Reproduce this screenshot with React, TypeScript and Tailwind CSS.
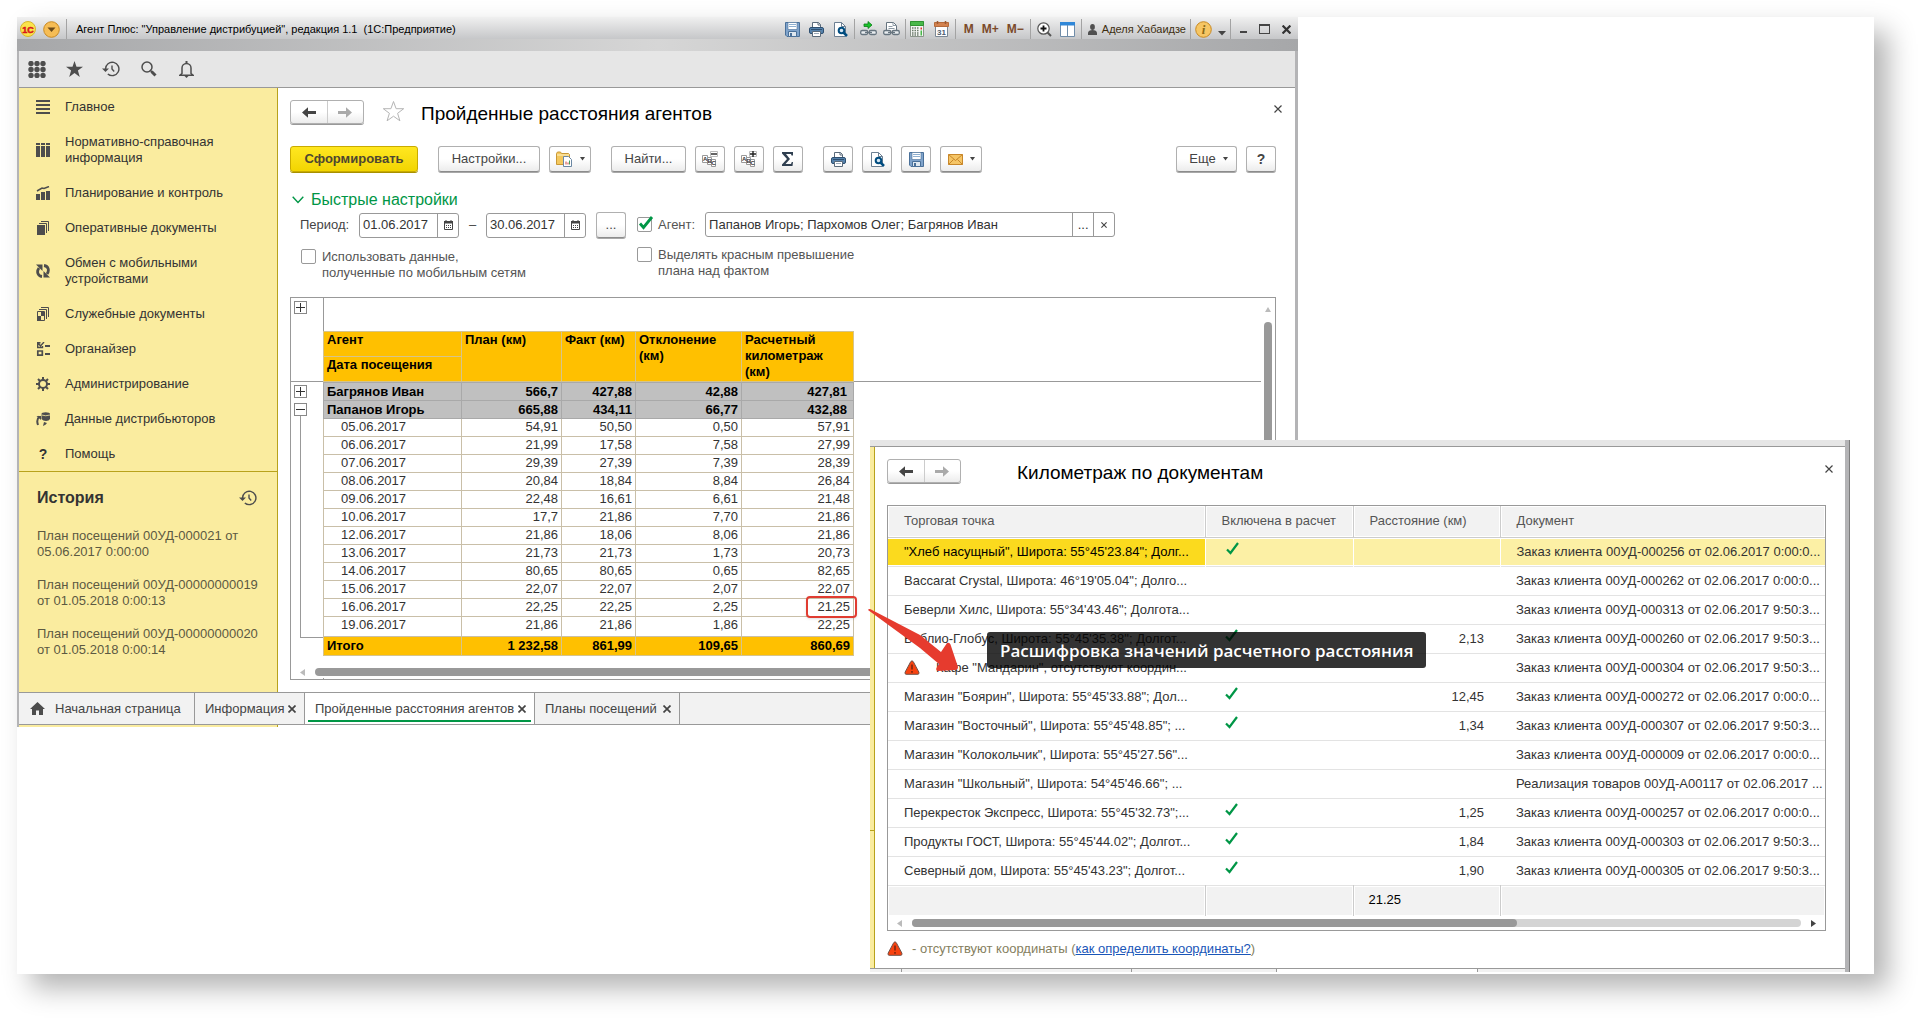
import React from 'react';

type IconProps = { className?: string };

/* ---------- icons ---------- */

const SaveIcon = ({ className }: IconProps) => (
  <svg className={className} width="15" height="15" viewBox="0 0 15 15">
    <path d="M.5.5h14v14H2L.5 13z" fill="#7fa3cb" stroke="#4a7099" />
    <path d="M3 .5h9v7H3z" fill="#fff" stroke="#4a7099" strokeWidth=".6" />
    <path d="M4 2.500h7M4 4.500h7" stroke="#8fb0d0" />
    <path d="M3.500 9.500h8v5h-8z" fill="#dfe8f0" stroke="#4a7099" />
    <path d="M5 11h2v3.500H5z" fill="#4a7099" />
  </svg>
);

const PrintIcon = ({ className }: IconProps) => (
  <svg className={className} width="15" height="15" viewBox="0 0 15 15">
    <path d="M3.500 6V.5h6l2 2V6" fill="#fff" stroke="#5b6b7b" />
    <path d="M9 .5v2.500h2.500" fill="none" stroke="#5b6b7b" />
    <rect x=".5" y="5.500" width="14" height="6" rx="1.500" fill="#5682ac" stroke="#2e4f70" />
    <path d="M2 7.500h11" stroke="#2e4f70" />
    <path d="M3.500 9.500h8v5h-8z" fill="#fff" stroke="#5b6b7b" />
    <path d="M5 11.500h5" stroke="#9aa9b8" />
  </svg>
);

const PreviewIcon = ({ className }: IconProps) => (
  <svg className={className} width="15" height="15" viewBox="0 0 15 15">
    <path d="M1.500.5h7l4 4v10h-11z" fill="#fff" stroke="#6c7f92" />
    <path d="M8.500.5v4h4" fill="none" stroke="#6c7f92" />
    <circle cx="8.500" cy="8.500" r="2.800" fill="#d5e6f3" stroke="#004d80" strokeWidth="2" />
    <path d="M10.500 10.500l3.500 3.500" stroke="#004d80" strokeWidth="2.500" />
  </svg>
);

const LinkIcon = () => (
  <svg width="17" height="16" viewBox="0 0 17 16">
    <path d="M4 3h4V.5L12 4 8 7.500V5.500H4z" fill="#19c22a" stroke="#0b7d18" strokeWidth=".8" />
    <rect x=".7" y="9.500" width="7" height="4" rx="1.500" fill="#e8edf0" stroke="#66747f" strokeWidth="1.300" />
    <rect x="9.300" y="9.500" width="7" height="4" rx="1.500" fill="#e8edf0" stroke="#66747f" strokeWidth="1.300" />
    <path d="M5 11.500h7" stroke="#66747f" strokeWidth="1.400" />
  </svg>
);

const PageLinkIcon = () => (
  <svg width="17" height="16" viewBox="0 0 17 16">
    <path d="M3.500 9V1.500h7l3 3V9" fill="#fff" stroke="#66747f" />
    <path d="M10 1.500v3h3.500M5.500 5.500h4M5.500 7.500h6" fill="none" stroke="#8d9aa5" />
    <rect x=".7" y="9.500" width="7" height="4" rx="1.500" fill="#e8edf0" stroke="#66747f" strokeWidth="1.300" />
    <rect x="9.300" y="9.500" width="7" height="4" rx="1.500" fill="#e8edf0" stroke="#66747f" strokeWidth="1.300" />
    <path d="M5 11.500h7" stroke="#66747f" strokeWidth="1.400" />
  </svg>
);

const CalculatorIcon = () => (
  <svg width="14" height="16" viewBox="0 0 14 16">
    <path d="M.5.5h13v15H.5z" fill="#f4f6f4" stroke="#8a958a" />
    <path d="M.5.5h13v4H.5z" fill="#49b84a" stroke="#2f9431" />
    <path d="M2 7h7M2 9.500h7M2 12h7M2 14h7" stroke="#6b7b6b" strokeWidth="1.300" strokeDasharray="1.500 1" />
    <path d="M10.500 6.500h1.500v2h-1.500z" fill="#d33" />
    <path d="M10.500 9.500h1.500v5h-1.500z" fill="#49b84a" />
  </svg>
);

const CalendarIcon = () => (
  <svg width="15" height="16" viewBox="0 0 15 16">
    <path d="M1.500 3h12v12.500h-12z" fill="#fff" stroke="#7b8794" />
    <path d="M.5 1.500h14v4H.5z" fill="#d3824f" stroke="#b56a3b" />
    <path d="M3.500 0v3M11.500 0v3" stroke="#9b5a32" strokeWidth="1.500" />
    <text x="7.500" y="13.500" textAnchor="middle" fontSize="8" fontWeight="700" fill="#4c5c70" fontFamily="Liberation Sans, sans-serif">
      31
    </text>
  </svg>
);

const ZoomInIcon = () => (
  <svg width="15" height="15" viewBox="0 0 15 15">
    <circle cx="6.500" cy="6.500" r="5.700" fill="#fff" stroke="#555" strokeWidth="1.200" />
    <path d="M6.500 3.500v6M3.500 6.500h6" stroke="#111" strokeWidth="1.800" />
    <path d="M10.500 10.500l3.500 3.500" stroke="#555" strokeWidth="2" />
  </svg>
);

const PanelsIcon = () => (
  <svg width="15" height="15" viewBox="0 0 15 15">
    <path d="M.5.5h14v14H.5z" fill="#fff" stroke="#6f8ca8" />
    <path d="M0 0h15v3.500H0z" fill="#2f87d8" />
    <path d="M7.500 3v12" stroke="#6f8ca8" />
  </svg>
);

const UserIcon = () => (
  <svg width="9" height="11" viewBox="0 0 9 11">
    <ellipse cx="4.500" cy="3" rx="2.400" ry="3" fill="#505050" />
    <path d="M0 11V9c0-2 2-3 4.500-3S9 7 9 9v2z" fill="#505050" />
  </svg>
);

const InfoIcon = () => (
  <svg width="17" height="17" viewBox="0 0 17 17">
    <circle cx="8.500" cy="8.500" r="7.800" fill="#f6c664" stroke="#c98a22" />
    <text x="8.500" y="13" textAnchor="middle" fontSize="13" fontStyle="italic" fontWeight="700" fill="#8b6914" fontFamily="Liberation Serif, serif">
      i
    </text>
  </svg>
);

const Caret = ({ className }: IconProps) => (
  <svg className={className} width="5" height="4" viewBox="0 0 5 4">
    <path d="M0 0h5L2.500 3.500z" fill="#444" />
  </svg>
);

const HistoryIcon = () => (
  <svg width="18" height="16" viewBox="0 0 18 16" fill="none" stroke="#4d4d4d">
    <path d="M3.500 8a6.700 6.700 0 1 1 2.300 5" strokeWidth="1.400" />
    <path d="M0 7.500h7L3.500 11z" fill="#4d4d4d" stroke="none" />
    <path d="M10 4.500V8l2.200 2.500" strokeWidth="1.400" />
  </svg>
);

const StarIcon = () => (
  <svg width="17" height="16" viewBox="0 0 17 16">
    <path d="M8.500 0l2 5.800H17l-5.100 3.800 1.900 6.400-5.300-3.900L3.200 16l1.900-6.400L0 5.800h6.500z" fill="#4d4d4d" />
  </svg>
);

const SearchIcon = () => (
  <svg width="16" height="16" viewBox="0 0 16 16" fill="none" stroke="#4d4d4d">
    <circle cx="6" cy="6" r="5" strokeWidth="1.500" />
    <path d="M9 9l2 2" strokeWidth="1.500" />
    <path d="M10.500 10.500l4 4" strokeWidth="3" />
  </svg>
);

const BellIcon = () => (
  <svg width="15" height="17" viewBox="0 0 15 17" fill="none" stroke="#4d4d4d" strokeWidth="1.500">
    <path d="M3 12.500V7a4.500 4.500 0 0 1 9 0v5.500l2 1.700H1z" />
    <path d="M7.500 0v2.500" strokeWidth="2" />
    <path d="M5.500 15h4l-2 2z" fill="#4d4d4d" stroke="none" />
  </svg>
);

const AppsIcon = () => (
  <svg width="18" height="17" viewBox="0 0 18 17" fill="#4d4d4d">
    {[3, 9, 15].map((x) => [2.5, 8.5, 14.5].map((y) => <circle key={`${x}-${y}`} cx={x} cy={y} r="2.700" />))}
  </svg>
);

const ArrowLeft = ({ color, flip }: { color: string; flip?: boolean }) => (
  <svg width="14" height="11" viewBox="0 0 14 11" className={flip ? 'rotate-180' : ''}>
    <path d="M0 5.500L6 .3v3.700h8v3H6v3.700z" fill={color} />
  </svg>
);

const CloseIcon = ({ size = 8, width = 1.2, color = '#444' }: { size?: number; width?: number; color?: string }) => (
  <svg width={size} height={size} viewBox="0 0 8 8">
    <path d="M.5.5l7 7M7.500.5l-7 7" stroke={color} strokeWidth={width} />
  </svg>
);

const CheckIcon = () => (
  <svg width="13" height="13" viewBox="0 0 13 13">
    <path d="M1 7.500L4.500 11 12 1" fill="none" stroke="#009646" strokeWidth="2.200" />
  </svg>
);

const WarningIcon = () => (
  <svg width="16" height="15" viewBox="0 0 16 15">
    <path d="M6.700 1.700q1.300-1.800 2.600 0l5.600 10.500q.5 2-1 2.100H2.100q-1.500-.1-1-2.100z" fill="#f8420f" stroke="#6f5048" />
    <path d="M8 4.500v5M8 11v1.700" stroke="#5f1f10" strokeWidth="1.300" />
  </svg>
);

const MiniCalendar = () => (
  <svg width="9" height="10" viewBox="0 0 9 10">
    <path d="M.5 1.500h8v8h-8z" fill="#fff" stroke="#444" />
    <path d="M0 1h9v2.500H0z" fill="#444" />
    <path d="M2 0v2M7 0v2" stroke="#444" />
    <path d="M2 5.500h5.500M2 7.500h5.500" stroke="#444" strokeDasharray="1 1" />
  </svg>
);

const GroupTextIcon = ({ plus }: { plus?: boolean }) => (
  <svg width="16" height="16" viewBox="0 0 16 16">
    <path d="M.5 4.500h5v7h-5z" fill="#fff" stroke="#999" />
    <path d="M5.500 6.500h4v7h-4z" fill="#fff" stroke="#999" />
    <path d="M9.500 8.500h4v7h-4z" fill="#fff" stroke="#999" />
    <g fontSize="6" fontWeight="700" fill="#333" fontFamily="Liberation Sans, sans-serif">
      <text x="1" y="10">A</text>
      <text x="5.500" y="12">B</text>
      <text x="9.500" y="14">C</text>
    </g>
    <path d="M8.500.5h7v5h-7z" fill="#fff" stroke="#bbb" />
    <path d={plus ? 'M9 3h6M12 0v6' : 'M9 3h6'} stroke="#222" strokeWidth="1.400" />
  </svg>
);

const FolderReportIcon = () => (
  <svg width="17" height="16" viewBox="0 0 17 16">
    <path d="M.5 13.500v-11l1-1.500h3l1 1.500h7l1 1v3H8v7z" fill="#f4c85e" stroke="#c99836" />
    <path d="M1 4h12" stroke="#fbe6a8" strokeWidth="1.500" />
    <path d="M7.500 5.500h5l3 3v7h-8z" fill="#fff" stroke="#6b87a3" />
    <path d="M10 13.500v-3M12 13.500v-2" stroke="#d0453c" />
    <path d="M13.500 13.500v-4" stroke="#3f9a5a" />
  </svg>
);

const MailIcon = () => (
  <svg width="15" height="11" viewBox="0 0 15 11">
    <path d="M.5.5h14v10H.5z" fill="#f5c566" stroke="#c8872a" />
    <path d="M.5.5l7 6 7-6M.5 10.500l5-5M14.500 10.500l-5-5" fill="none" stroke="#c8872a" />
  </svg>
);

const HomeIcon = () => (
  <svg width="15" height="13" viewBox="0 0 15 13">
    <path d="M7.500 0L15 7h-2v6H9V8.500H6V13H2V7H0z" fill="#4d4d4d" />
  </svg>
);

const menuIcons: Record<string, React.ReactNode> = {
  main: <path d="M0 1h14M0 5h14M0 9h14M0 13h14" stroke="#4d4d4d" strokeWidth="2" />,
  ref: (
    <g fill="#4d4d4d">
      <path d="M0 0h4v2H0zM5 0h4v2H5zM10 0h4v2h-4zM0 3h4v11H0zM5 3h4v11H5zM10 3h4v11h-4z" />
    </g>
  ),
  plan: (
    <g fill="#4d4d4d">
      <path d="M0 8h4v6H0zM5 6h4v8H5zM10 5h4v9h-4z" />
      <path d="M1 5l5-3 2 .5L13 .5" fill="none" stroke="#4d4d4d" strokeWidth="1.500" />
    </g>
  ),
  docs: (
    <g>
      <path d="M1 4h8v10H1z" fill="#4d4d4d" />
      <path d="M3 2.500h7.500V12M5 .5h7.500V10" fill="none" stroke="#4d4d4d" />
    </g>
  ),
  sync: (
    <g fill="none" stroke="#4d4d4d" strokeWidth="2.800">
      <path d="M6 12.500C1.500 12 .5 7.500 3 4" />
      <path d="M8 1.500c4.500.5 5.500 5 3 8.500" />
      <path d="M0 .5h6.500V7zM14 13.500H7.500V7z" fill="#4d4d4d" stroke="none" />
    </g>
  ),
  service: (
    <g>
      <path d="M1.500 4.500h7v9h-7z" fill="none" stroke="#4d4d4d" />
      <path d="M1 9h4v5H1zM5 5h3.500v4H5z" fill="#4d4d4d" />
      <path d="M3 2.500h7.500V12M5 .5h7.500V10" fill="none" stroke="#4d4d4d" />
    </g>
  ),
  organizer: (
    <g fill="none" stroke="#4d4d4d">
      <path d="M1 .7h3.500M1.700 0v6M1 5.500h5.500V4M2.500 1.500l2 2.500L8 0" strokeWidth="1.400" />
      <path d="M1.800 9h4.500v4.200H1.800z" strokeWidth="1.700" />
      <path d="M9 4h5M9 12h5" strokeWidth="2" />
    </g>
  ),
  admin: (
    <g fill="none" stroke="#4d4d4d">
      <circle cx="7" cy="7" r="4" strokeWidth="2" />
      <path d="M7 0v3M7 11v3M0 7h3M11 7h3M2 2l2 2M10 10l2 2M12 2l-2 2M4 10l-2 2" strokeWidth="2" />
    </g>
  ),
  data: (
    <g>
      <path d="M5.500 2Q5.500.3 9.700.3T14 2v5q-1 2-4 2T5.500 7z" fill="#4d4d4d" />
      <path d="M5.500 3q4.200 1.500 8.500 0" fill="none" stroke="#faec9f" strokeWidth=".8" />
      <path d="M3.500 4.500Q0 7.500 2 13" fill="none" stroke="#4d4d4d" strokeWidth="2" />
      <path d="M.5 4h4.500v4zM7 14l1-4 3 1q-1 2-4 3z" fill="#4d4d4d" />
    </g>
  ),
};

/* ---------- data ---------- */

const menu: { icon: string; label: string }[] = [
  { icon: 'main', label: 'Главное' },
  { icon: 'ref', label: 'Нормативно-справочная информация' },
  { icon: 'plan', label: 'Планирование и контроль' },
  { icon: 'docs', label: 'Оперативные документы' },
  { icon: 'sync', label: 'Обмен с мобильными устройствами' },
  { icon: 'service', label: 'Служебные документы' },
  { icon: 'organizer', label: 'Органайзер' },
  { icon: 'admin', label: 'Администрирование' },
  { icon: 'data', label: 'Данные дистрибьюторов' },
  { icon: 'help', label: 'Помощь' },
];

const history = [
  'План посещений 00УД-000021 от 05.06.2017 0:00:00',
  'План посещений 00УД-00000000019 от 01.05.2018 0:00:13',
  'План посещений 00УД-00000000020 от 01.05.2018 0:00:14',
];

const agents = [
  ['Багрянов Иван', '566,7', '427,88', '42,88', '427,81'],
  ['Папанов Игорь', '665,88', '434,11', '66,77', '432,88'],
];

const visits = [
  ['05.06.2017', '54,91', '50,50', '0,50', '57,91'],
  ['06.06.2017', '21,99', '17,58', '7,58', '27,99'],
  ['07.06.2017', '29,39', '27,39', '7,39', '28,39'],
  ['08.06.2017', '20,84', '18,84', '8,84', '26,84'],
  ['09.06.2017', '22,48', '16,61', '6,61', '21,48'],
  ['10.06.2017', '17,7', '21,86', '7,70', '21,86'],
  ['12.06.2017', '21,86', '18,06', '8,06', '21,86'],
  ['13.06.2017', '21,73', '21,73', '1,73', '20,73'],
  ['14.06.2017', '80,65', '80,65', '0,65', '82,65'],
  ['15.06.2017', '22,07', '22,07', '2,07', '22,07'],
  ['16.06.2017', '22,25', '22,25', '2,25', '21,25'],
  ['19.06.2017', '21,86', '21,86', '1,86', '22,25'],
];

const total = ['Итого', '1 232,58', '861,99', '109,65', '860,69'];

interface DocRow {
  point: string;
  included?: boolean;
  warning?: boolean;
  distance?: string;
  doc: string;
}

const docRows: DocRow[] = [
  { point: '"Хлеб насущный", Широта: 55°45\'23.84"; Долг...', included: true, doc: 'Заказ клиента 00УД-000256 от 02.06.2017 0:00:0...' },
  { point: 'Baccarat Crystal, Широта: 46°19\'05.04"; Долго...', doc: 'Заказ клиента 00УД-000262 от 02.06.2017 0:00:0...' },
  { point: 'Беверли Хилс, Широта: 55°34\'43.46"; Долгота...', doc: 'Заказ клиента 00УД-000313 от 02.06.2017 9:50:3...' },
  { point: 'Библио-Глобус, Широта: 55°45\'35.38"; Долгот...', included: true, distance: '2,13', doc: 'Заказ клиента 00УД-000260 от 02.06.2017 9:50:3...' },
  { point: 'Кафе "Мандарин", отсутствуют координ...', warning: true, doc: 'Заказ клиента 00УД-000304 от 02.06.2017 9:50:3...' },
  { point: 'Магазин "Боярин", Широта: 55°45\'33.88"; Дол...', included: true, distance: '12,45', doc: 'Заказ клиента 00УД-000272 от 02.06.2017 0:00:0...' },
  { point: 'Магазин "Восточный", Широта: 55°45\'48.85"; ...', included: true, distance: '1,34', doc: 'Заказ клиента 00УД-000307 от 02.06.2017 9:50:3...' },
  { point: 'Магазин "Колокольчик", Широта: 55°45\'27.56"...', doc: 'Заказ клиента 00УД-000009 от 02.06.2017 0:00:0...' },
  { point: 'Магазин "Школьный", Широта: 54°45\'46.66"; ...', doc: 'Реализация товаров 00УД-А00117 от 02.06.2017 ...' },
  { point: 'Перекресток Экспресс, Широта: 55°45\'32.73";...', included: true, distance: '1,25', doc: 'Заказ клиента 00УД-000257 от 02.06.2017 0:00:0...' },
  { point: 'Продукты ГОСТ, Широта: 55°45\'44.02"; Долгот...', included: true, distance: '1,84', doc: 'Заказ клиента 00УД-000303 от 02.06.2017 9:50:3...' },
  { point: 'Северный дом, Широта: 55°45\'43.23"; Долгот...', included: true, distance: '1,90', doc: 'Заказ клиента 00УД-000305 от 02.06.2017 9:50:3...' },
];

/* ---------- small parts ---------- */

const ToolButton: React.FC<{ className?: string; label?: string; children: React.ReactNode }> = ({ className = '', label, children }) => (
  <button
    type="button"
    aria-label={label}
    className={`flex h-[26px] shrink-0 items-center justify-center rounded-[3px] border border-[#b0b0b0] border-b-[#8c8c8c] bg-linear-to-b from-white from-50% to-[#ececec] text-[#444] shadow-[0_1px_0_#a8a8a8] ${className}`}
  >
    {children}
  </button>
);

const NavButtons = () => (
  <div className="flex h-[24px] w-[74px] shrink-0 rounded-[3px] border border-[#b0b0b0] bg-linear-to-b from-white from-50% to-[#ececec] shadow-[0_1px_0_#999]">
    <button type="button" aria-label="Назад" className="flex flex-1 items-center justify-center border-r border-[#ccc]">
      <ArrowLeft color="#444" />
    </button>
    <button type="button" aria-label="Вперед" className="flex flex-1 items-center justify-center">
      <ArrowLeft color="#aaa" flip />
    </button>
  </div>
);

const Separator = () => <span className="h-5 w-px shrink-0 bg-[#a3a3a3]" />;

const DateField = ({ value, label }: { value: string; label: string }) => (
  <div className="flex h-[25px] w-[100px] rounded-[3px] border border-[#999] bg-white">
    <input aria-label={label} defaultValue={value} className="w-[77px] min-w-0 pl-[3px] text-[#333] outline-none" />
    <button type="button" aria-label="Выбрать дату" className="flex flex-1 items-center justify-center border-l border-[#999]">
      <MiniCalendar />
    </button>
  </div>
);

const CheckBox: React.FC<{ checked?: boolean; id: string; children: React.ReactNode }> = ({ checked, id, children }) => (
  <div className="flex items-start gap-[6px]">
    <span className="relative block size-[15px] shrink-0">
      <input
        id={id}
        type="checkbox"
        defaultChecked={checked}
        className="peer block size-[15px] appearance-none rounded-[2px] border border-[#999] bg-white"
      />
      <svg className="pointer-events-none absolute inset-0 hidden overflow-visible peer-checked:block" width="15" height="15" viewBox="0 0 15 15">
        <path d="M3 6.500L6.500 10.500 15 0" fill="none" stroke="#009646" strokeWidth="2.800" />
      </svg>
    </span>
    <label htmlFor={id} className="leading-4 text-[#555]">
      {children}
    </label>
  </div>
);

const ExpandButton = ({ open, className = '' }: { open?: boolean; className?: string }) => (
  <button
    type="button"
    aria-label={open ? 'Свернуть' : 'Развернуть'}
    className={`flex size-[13px] items-center justify-center border border-[#888] bg-white ${className}`}
  >
    <svg width="9" height="9" viewBox="0 0 9 9">
      <path d={open ? 'M0 4.500h9' : 'M0 4.500h9M4.500 0v9'} stroke="#333" />
    </svg>
  </button>
);

/* ---------- main window ---------- */

const TitleBar = () => (
  <header className="flex h-[34px] flex-col bg-linear-to-r from-[#a6a7a9] via-[#d6d6d6] to-[#a6a7a9]">
    <div className="flex h-[22px] items-center bg-linear-to-b from-[#f0f0f0] to-[#c6c7c9] pt-[2px] pr-[7px] pl-[3px]">
      <svg width="16" height="16" viewBox="0 0 16 16" className="shrink-0">
        <circle cx="8" cy="8" r="7.500" fill="#fbe44b" stroke="#d8b52c" />
        <text x="8" y="11.500" textAnchor="middle" fontSize="9" fontWeight="700" fill="#d8171b" stroke="#d8171b" strokeWidth=".5" fontFamily="Liberation Sans, sans-serif">
          1С
        </text>
      </svg>
      <button type="button" aria-label="Главное меню" className="ml-[7px] shrink-0">
        <svg width="17" height="17" viewBox="0 0 17 17">
          <circle cx="8.500" cy="8.500" r="7.800" fill="#f6bd55" stroke="#c98a22" />
          <path d="M4.500 6.500h8l-4 4.500z" fill="#6b4a1a" />
        </svg>
      </button>
      <span className="ml-[6px] h-5 w-px bg-[#a3a3a3]" />
      <h1 className="ml-[9px] text-[11px] whitespace-nowrap text-black">Агент Плюс: "Управление дистрибуцией", редакция 1.1&nbsp; (1С:Предприятие)</h1>
      <div className="ml-auto flex items-center">
        <div className="mr-[6px] flex items-center gap-[9px]">
          <SaveIcon />
          <PrintIcon />
          <PreviewIcon />
        </div>
        <Separator />
        <div className="mx-[5px] flex items-center gap-[6px]">
          <LinkIcon />
          <PageLinkIcon />
        </div>
        <Separator />
        <div className="mr-[6px] ml-[4px] flex items-center gap-[10px]">
          <CalculatorIcon />
          <CalendarIcon />
        </div>
        <Separator />
        <div className="flex w-[74px] items-center justify-between pr-[6px] pl-2 text-[12px] font-bold text-[#7b4a2b]">
          <button type="button">M</button>
          <button type="button">M+</button>
          <button type="button">M−</button>
        </div>
        <Separator />
        <div className="mx-[6px] flex items-center gap-[8px]">
          <ZoomInIcon />
          <PanelsIcon />
        </div>
        <Separator />
        <div className="mr-[4px] ml-[6px] flex items-center gap-[5px] text-[11px] text-[#3d2e10]">
          <UserIcon />
          <span>Аделя Хабаидзе</span>
        </div>
        <Separator />
        <div className="mx-[4px] flex items-center gap-[6px]">
          <InfoIcon />
          <svg width="8" height="5" viewBox="0 0 8 5" className="mt-2">
            <path d="M0 0h8L4 4.500z" fill="#444" />
          </svg>
        </div>
        <Separator />
        <div className="ml-[9px] flex items-center gap-[12px]">
          <button type="button" aria-label="Свернуть окно" className="mt-[6px] h-[2px] w-[7px] bg-[#444]" />
          <button type="button" aria-label="Развернуть окно" className="h-[10px] w-[11px] border border-t-2 border-[#444]" />
          <button type="button" aria-label="Закрыть окно">
            <CloseIcon size={9} width={2} color="#333" />
          </button>
        </div>
      </div>
    </div>
  </header>
);

const Sidebar = () => (
  <aside className="w-[259px] shrink-0 border-r border-[#b8a21c] bg-[#faec9f]">
    <nav className="border-b border-[#b8a21c] pt-px">
      {menu.map((item) => (
        <a key={item.label} href="#" className="flex items-center pt-[10px] pr-9 pb-[9px] pl-[17px] leading-4 text-[#333]">
          {item.icon === 'help' ? (
            <span className="w-[14px] text-center text-[14px] font-bold">?</span>
          ) : (
            <svg width="14" height="14" viewBox="0 0 14 14" className="shrink-0">
              {menuIcons[item.icon]}
            </svg>
          )}
          <span className="ml-[15px] max-w-[160px]">{item.label}</span>
        </a>
      ))}
    </nav>
    <section className="pb-[34px] pl-[18px]">
      <div className="flex h-[52px] items-center justify-between pr-[20px]">
        <h2 className="text-[16px] font-bold text-[#333]">История</h2>
        <HistoryIcon />
      </div>
      <div className="mt-1 flex flex-col gap-[17px] pr-[10px] leading-4 text-[#5c5942]">
        {history.map((item) => (
          <a key={item} href="#">
            {item}
          </a>
        ))}
      </div>
    </section>
  </aside>
);

const CommandBar = () => (
  <div className="flex items-center">
    <button
      type="button"
      className="h-[26px] w-[128px] rounded-[3px] border border-[#c9ab00] bg-linear-to-b from-[#ffe71f] to-[#f2d500] font-bold text-[#4d4630] shadow-[0_1px_0_#a89000]"
    >
      Сформировать
    </button>
    <ToolButton className="ml-5 w-[102px]">Настройки...</ToolButton>
    <ToolButton className="ml-[9px] w-[42px] gap-[7px]" label="Варианты отчета">
      <FolderReportIcon />
      <Caret />
    </ToolButton>
    <ToolButton className="ml-5 w-[75px]">Найти...</ToolButton>
    <ToolButton className="ml-[9px] w-[30px]" label="Свернуть группы">
      <GroupTextIcon />
    </ToolButton>
    <ToolButton className="ml-[9px] w-[30px]" label="Развернуть группы">
      <GroupTextIcon plus />
    </ToolButton>
    <ToolButton className="ml-[9px] w-[30px]" label="Сумма">
      <svg width="12" height="14" viewBox="0 0 12 14">
        <path d="M0 0h11v3.500H9.500L9 2H4l4 5-4.500 5H9l.8-2H11l-.5 4H0v-1.500L5 7 0 1.500z" fill="#2f3f50" />
      </svg>
    </ToolButton>
    <ToolButton className="ml-5 w-[30px]" label="Печать">
      <PrintIcon />
    </ToolButton>
    <ToolButton className="ml-[9px] w-[30px]" label="Предварительный просмотр">
      <PreviewIcon />
    </ToolButton>
    <ToolButton className="ml-[9px] w-[30px]" label="Сохранить">
      <SaveIcon />
    </ToolButton>
    <ToolButton className="ml-[9px] w-[42px] gap-[7px]" label="Отправить">
      <MailIcon />
      <Caret />
    </ToolButton>
    <ToolButton className="ml-auto w-[61px] gap-[7px] pl-1">
      Еще
      <Caret />
    </ToolButton>
    <ToolButton className="ml-[9px] w-[30px] text-[14px] font-bold" label="Справка">
      ?
    </ToolButton>
  </div>
);

const QuickSettings = () => (
  <section className="mt-[18px]">
    <h3 className="flex items-center gap-[7px] pl-[2px] text-[16px] leading-[20px] text-[#009646]">
      <svg width="12" height="8" viewBox="0 0 12 8">
        <path d="M.7.7L6 6.500 11.300.7" fill="none" stroke="#009646" strokeWidth="1.400" />
      </svg>
      Быстрые настройки
    </h3>
    <div className="mt-[2px] flex items-start pl-[10px]">
      <div className="w-[337px]">
        <div className="flex items-center">
          <span className="w-[59px] text-[#444]">Период:</span>
          <DateField value="01.06.2017" label="Начало периода" />
          <span className="w-[27px] text-center text-[#444]">–</span>
          <DateField value="30.06.2017" label="Конец периода" />
          <ToolButton className="ml-[10px] w-[30px]">...</ToolButton>
        </div>
        <div className="mt-[11px] pl-px">
          <CheckBox id="mobile-data">
            Использовать данные,
            <br />
            полученные по мобильным сетям
          </CheckBox>
        </div>
      </div>
      <div>
        <div className="flex h-[25px] items-center">
          <CheckBox checked id="agent-filter">
            Агент:
          </CheckBox>
          <div className="ml-[10px] flex h-[25px] w-[410px] rounded-[3px] border border-[#999] bg-white">
            <input aria-label="Агент" defaultValue="Папанов Игорь; Пархомов Олег; Багрянов Иван" className="min-w-0 flex-1 pl-[3px] text-[#333] outline-none" />
            <button type="button" aria-label="Выбрать" className="w-[21px] border-l border-[#999] text-[#333]">
              ...
            </button>
            <button type="button" aria-label="Очистить" className="flex w-[21px] items-center justify-center border-l border-[#999]">
              <CloseIcon size={6} width={1.5} />
            </button>
          </div>
        </div>
        <div className="mt-[10px]">
          <CheckBox id="highlight">
            Выделять красным превышение
            <br />
            плана над фактом
          </CheckBox>
        </div>
      </div>
    </div>
  </section>
);

const Report = () => (
  <section className="relative mt-4 flex h-[383px] border border-[#999] bg-white">
    <div className="flex w-[33px] shrink-0 flex-col items-start border-r border-[#999] pt-[3px]">
      <ExpandButton className="ml-[3px]" />
      <div className="mt-[67px] w-full border-t border-[#999] pt-[3px] pl-[3px]">
        <ExpandButton />
        <ExpandButton open className="mt-[5px]" />
      </div>
      <div className="ml-[9px] h-[222px] w-[23px] border-b border-l border-[#999]" />
      <div className="-mr-px h-[40px] w-[33px] border-r border-white" />
    </div>
    <div className="min-w-0 flex-1">
      <div className="border-b border-[#999] pt-[33px]">
        <table className="-mb-px -ml-px w-[530px] table-fixed border-collapse bg-[#ffc000] text-left font-bold text-black">
          <colgroup>
            <col className="w-[138px]" />
            <col className="w-[100px]" />
            <col className="w-[74px]" />
            <col className="w-[106px]" />
            <col className="w-[112px]" />
          </colgroup>
          <thead className="align-top leading-4">
            <tr className="h-[25px]">
              <th className="border border-[#d6c48c] px-[3px]">Агент</th>
              <th rowSpan={2} className="border border-[#d6c48c] px-[3px]">План (км)</th>
              <th rowSpan={2} className="border border-[#d6c48c] px-[3px] whitespace-nowrap">Факт (км)</th>
              <th rowSpan={2} className="border border-[#d6c48c] px-[3px]">Отклонение (км)</th>
              <th rowSpan={2} className="border border-[#d6c48c] px-[3px]">Расчетный километраж (км)</th>
            </tr>
            <tr className="h-[25px]">
              <th className="border border-[#d6c48c] px-[3px]">Дата посещения</th>
            </tr>
          </thead>
        </table>
      </div>
      <table className="-ml-px w-[530px] table-fixed border-collapse text-right leading-4">
        <colgroup>
          <col className="w-[138px]" />
          <col className="w-[100px]" />
          <col className="w-[74px]" />
          <col className="w-[106px]" />
          <col className="w-[112px]" />
        </colgroup>
        <tbody>
          {agents.map((row) => (
            <tr key={row[0]} className="h-[18px] bg-[#c0c0c0] font-bold text-black">
              {row.map((cell, i) => (
                <td key={i} className="border border-[#a9a9a9] pr-[3px] first:pl-[3px] first:text-left last:pr-[6px]">
                  {cell}
                </td>
              ))}
            </tr>
          ))}
          {visits.map((row) => (
            <tr key={row[0]} className="h-[18px] align-top text-[#333] last:h-[20px]">
              {row.map((cell, i) => (
                <td key={i} className="relative border border-[#c9bfa8] pr-[3px] first:pl-[17px] first:text-left">
                  {cell}
                  {row[0] === '16.06.2017' && i === 4 && (
                    <span className="absolute -top-[3px] -right-[4px] h-[22px] w-[51px] rounded-[4px] border-2 border-[#e03c31] shadow-sm" />
                  )}
                </td>
              ))}
            </tr>
          ))}
        </tbody>
        <tfoot>
          <tr className="h-[19px] bg-[#ffc000] font-bold text-black">
            {total.map((cell, i) => (
              <td key={i} className="border border-[#d6c48c] pr-[3px] first:pl-[3px] first:text-left">
                {cell}
              </td>
            ))}
          </tr>
        </tfoot>
      </table>
    </div>
    <div className="flex w-[14px] flex-col items-center pt-[9px]">
      <svg width="6" height="5" viewBox="0 0 6 5">
        <path d="M3 0l3 5H0z" fill="#bbb" />
      </svg>
      <div className="mt-[10px] w-2 flex-1 rounded-full bg-[#999]" />
    </div>
    <div className="absolute right-[14px] bottom-[3px] left-[9px] flex items-center gap-[10px]">
      <svg width="5" height="7" viewBox="0 0 5 7">
        <path d="M5 0v7L0 3.500z" fill="#bbb" />
      </svg>
      <div className="h-2 flex-1 rounded-full bg-[#999]" />
    </div>
  </section>
);

const tabBase = 'flex h-full items-center border-r border-[#999]';

const BottomTabs = () => (
  <nav className="flex h-[33px] border-y border-[#999] bg-[#f2f2f2] text-[#444]">
    <a href="#" className={`${tabBase} w-[176px] gap-[10px] pl-[11px]`}>
      <HomeIcon />
      Начальная страница
    </a>
    <a href="#" className={`${tabBase} w-[110px] justify-between pr-2 pl-[10px]`}>
      Информация
      <CloseIcon width={1.7} />
    </a>
    <a href="#" className={`${tabBase} relative w-[230px] justify-between bg-white pr-2 pl-[10px]`}>
      Пройденные расстояния агентов
      <CloseIcon width={1.7} />
      <span className="absolute right-[3px] bottom-[2px] left-[3px] h-[2px] bg-[#009646]" />
    </a>
    <a href="#" className={`${tabBase} w-[145px] justify-between pr-2 pl-[10px]`}>
      Планы посещений
      <CloseIcon width={1.7} />
    </a>
  </nav>
);

const MainWindow = () => (
  <div className="mr-[576px]">
    <TitleBar />
    <div className="border-r-[3px] border-l-2 border-[#b4b4b6]">
      <div className="flex h-[37px] items-center border-b border-[#999] bg-[#e6e6e6] pl-[9px]">
        <AppsIcon />
        <span className="ml-5"><StarIcon /></span>
        <span className="ml-[19px]"><HistoryIcon /></span>
        <span className="ml-[21px]"><SearchIcon /></span>
        <span className="ml-[22px]"><BellIcon /></span>
      </div>
      <div className="flex">
        <Sidebar />
        <main className="flex min-w-0 flex-1 flex-col pt-3 pr-[19px] pl-3">
          <div className="flex">
            <NavButtons />
            <svg width="23" height="23" viewBox="0 0 23 23" className="ml-[18px]">
              <path d="M11.500 1.500l2.600 7.200h7.600l-6.100 4.600 2.300 7.500-6.400-4.600-6.400 4.600 2.300-7.500-6.100-4.600h7.600z" fill="#fff" stroke="#b5b5b5" />
            </svg>
            <h2 className="ml-4 text-[19px] leading-[28px] text-black">Пройденные расстояния агентов</h2>
            <button type="button" aria-label="Закрыть" className="mt-px -mr-[10px] ml-auto flex size-4 items-center justify-center">
              <CloseIcon />
            </button>
          </div>
          <div className="mt-[18px]">
            <CommandBar />
          </div>
          <QuickSettings />
          <Report />
        </main>
      </div>
      <BottomTabs />
      <div className="h-[2px] w-[259px] border-r border-[#b8a21c] bg-[#faec9f]" />
    </div>
  </div>
);

/* ---------- document window ---------- */

const DocumentTable = () => (
  <div className="border border-[#999] bg-white">
    <table className="w-full table-fixed border-collapse">
      <colgroup>
        <col className="w-[317px]" />
        <col className="w-[148px]" />
        <col className="w-[147px]" />
        <col />
      </colgroup>
      <thead>
        <tr className="h-[31px] border-b border-[#ccc] bg-[#f2f2f2] text-left text-[#555]">
          {['Торговая точка', 'Включена в расчет', 'Расстояние (км)', 'Документ'].map((title) => (
            <th key={title} className="border-r border-[#ccc] pb-[2px] pl-4 font-normal shadow-[inset_0_0_0_1px_#fff] last:border-r-0">
              {title}
            </th>
          ))}
        </tr>
      </thead>
      <tbody className="text-[#333]">
        {docRows.map((row, index) => {
          const selected = index === 0;
          const rest = selected ? 'bg-[#fcf0a5] border-r border-white last:border-r-0 shadow-[inset_0_1px_0_#fff,inset_0_-1px_0_#fff]' : '';
          const first = selected ? 'bg-[#fbda1e] border-r border-white text-black shadow-[inset_0_1px_0_#fff,inset_0_-1px_0_#fff]' : '';
          return (
            <tr key={row.doc} className="h-[29px] border-b border-[#e3e3e3]">
              <td className={`pl-4 whitespace-nowrap ${first}`}>
                {row.warning ? (
                  <span className="flex items-center gap-4">
                    <WarningIcon />
                    {row.point}
                  </span>
                ) : (
                  row.point
                )}
              </td>
              <td className={`pb-[6px] pl-5 ${rest}`}>{row.included && <CheckIcon />}</td>
              <td className={`pr-4 text-right ${rest}`}>{row.distance}</td>
              <td className={`overflow-hidden pl-4 whitespace-nowrap ${rest}`}>{row.doc}</td>
            </tr>
          );
        })}
      </tbody>
      <tfoot>
        <tr className="h-[31px] border-t border-[#ccc] bg-[#f2f2f2] text-black">
          <td className="border-r border-[#ccc] shadow-[inset_0_0_0_1px_#fff]" />
          <td className="border-r border-[#ccc] shadow-[inset_0_0_0_1px_#fff]" />
          <td className="border-r border-[#ccc] pb-[2px] pl-[15px] shadow-[inset_0_0_0_1px_#fff]">21.25</td>
          <td className="shadow-[inset_0_0_0_1px_#fff]" />
        </tr>
      </tfoot>
    </table>
    <div className="flex h-[14px] items-center gap-[10px] pr-[9px] pl-[9px]">
      <svg width="5" height="7" viewBox="0 0 5 7">
        <path d="M5 0v7L0 3.500z" fill="#bbb" />
      </svg>
      <div className="h-2 flex-1 rounded-full bg-[#d4d4d4]">
        <div className="h-2 w-[68%] rounded-full bg-[#999]" />
      </div>
      <svg width="5" height="7" viewBox="0 0 5 7">
        <path d="M0 0v7l5-3.500z" fill="#444" />
      </svg>
    </div>
  </div>
);

const DocumentWindow = () => (
  <div className="absolute top-[423px] right-6 left-[853px] flex border-r border-[#7d7d7d] bg-white">
    <div className="min-w-0 flex-1 border-r-4 border-[#b4b4b6]">
      <div className="h-[7px] border-b border-[#999] bg-[#e6e6e6]" />
      <div className="flex">
        <div className="flex w-[5px] shrink-0 flex-col border-r border-[#b8a21c] bg-[#faec9f]">
          <div className="h-[384px] border-b border-[#b8a21c]" />
        </div>
        <div className="min-w-0 flex-1 pt-3 pr-[19px] pb-[9px] pl-3">
          <div className="flex">
            <NavButtons />
            <h2 className="ml-14 text-[19px] leading-[28px] text-black">Километраж по документам</h2>
            <button type="button" aria-label="Закрыть" className="-mr-[13px] ml-auto flex size-5 items-center justify-center">
              <CloseIcon />
            </button>
          </div>
          <div className="mt-[18px]">
            <DocumentTable />
          </div>
          <p className="mt-2 flex items-center text-[#85805e]">
            <WarningIcon />
            <span className="ml-[9px]">
              - отсутствуют координаты (
              <a href="#" className="text-[#1a56b8] underline">
                как определить координаты?
              </a>
              )
            </span>
          </p>
        </div>
      </div>
      <div className="flex h-[4px] border-t border-[#999] bg-[#f2f2f2]">
        <span className="w-[32px] border-r border-[#999]" />
        <span className="w-[230px] border-r border-[#999]" />
        <span className="w-[145px] border-r border-[#999]" />
        <span className="w-[201px] border-r border-[#999] bg-white" />
      </div>
    </div>
  </div>
);

const App: React.FC = () => (
  <div className="overflow-hidden bg-white pt-[17px] pr-12 pb-12 pl-[17px] font-['Liberation_Sans',Arial,sans-serif] text-[13px]">
    <div className="relative min-h-[957px] bg-white shadow-[14px_14px_26px_rgba(0,0,0,0.3)]">
      <MainWindow />
      <DocumentWindow />
      <div className="absolute top-[615px] left-[970px] flex h-[36px] items-center rounded-[3px] bg-black/80 px-[13px] pt-px font-['Open_Sans',sans-serif] text-[17px] font-semibold whitespace-nowrap text-white">
        Расшифровка значений расчетного расстояния
      </div>
      <svg className="absolute top-[590px] left-[849px]" width="96" height="66" viewBox="0 0 96 66">
        <path d="M2 3Q3 1 6 3L54 28 75 45 81 36Q84 35 85 39L92 60Q92 63 89 63L72 64Q69 63 71 60L73 57 54 41z" fill="#e63b2e" />
      </svg>
    </div>
  </div>
);

export default App;
